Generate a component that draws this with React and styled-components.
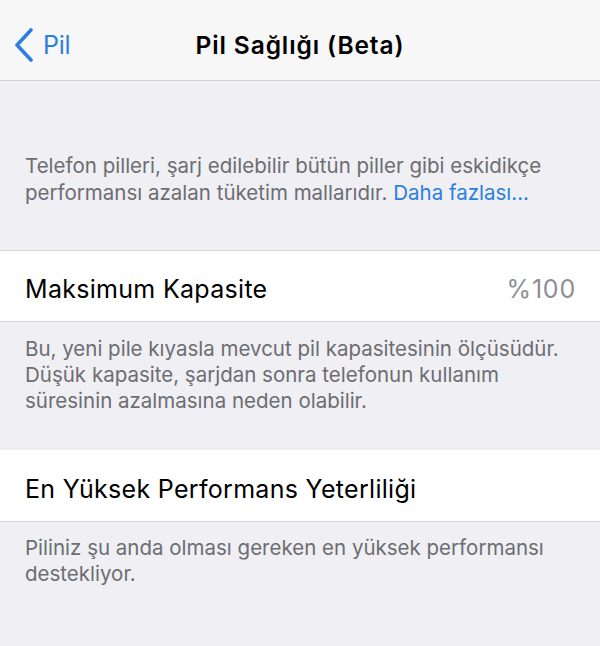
import React from 'react';
import styled, { createGlobalStyle } from 'styled-components';

const GlobalStyle = createGlobalStyle`
  html, body {
    margin: 0;
    padding: 0;
    background: #efeff4;
    font-family: Inter, "Noto Sans", sans-serif;
    -webkit-font-smoothing: antialiased;
  }
`

const Page = styled.div`
  width: 600px;
  height: 646px;
  overflow: hidden;
  background: #efeff4;
`

const NavBar = styled.div`
  height: 81px;
  background: #f7f7f8;
  border-bottom: 1px solid #cfcfd3;
  display: grid;
  grid-template-columns: 120px 1fr 120px;
  align-items: center;
  box-sizing: border-box;
  padding-top: 10px;
`

const BackButton = styled.div`
  display: flex;
  align-items: center;
  gap: 8px;
  padding-left: 13px;
  color: #2b7fe0;
  font-size: 25px;
  letter-spacing: -0.2px;
`

const Title = styled.div`
  text-align: center;
  font-size: 24.5px;
  font-weight: 600;
  color: #000;
  letter-spacing: 0.9px;
`

const Note = styled.p`
  margin: 0;
  padding: ${p => p.$pad};
  font-size: 20.5px;
  line-height: ${p => p.$lh || 26}px;
  color: #6d6d72;
  letter-spacing: 0;
`

const Link = styled.span`
  color: #2b7fe0;
`

const Row = styled.div`
  height: 64px;
  box-sizing: content-box;
  background: #fff;
  border-top: 1px solid ${p => p.$topLine ? '#d8d8dc' : '#fff'};
  border-bottom: 1px solid #d8d8dc;
  display: flex;
  align-items: center;
  justify-content: space-between;
  padding: 6px 24px 0 25px;
  font-size: 25px;
  color: #000;
  letter-spacing: 0.3px;
`

const Label = styled.span``

const Value = styled.span`
  color: #8e8e93;
  letter-spacing: 0.8px;
`

const Chevron = () => (
  <svg width="22" height="34" viewBox="0 0 22 34">
    <path d="M18 2 L4 17 L18 32" fill="none" stroke="#2b7fe0" strokeWidth="3.6" strokeLinecap="round" strokeLinejoin="round" />
  </svg>
)

export default function App() {
  return (
    <Page>
      <GlobalStyle />
      <NavBar>
        <BackButton>
          <Chevron />
          Pil
        </BackButton>
        <Title>Pil Sağlığı (Beta)</Title>
        <div />
      </NavBar>
      <Note $pad="71px 20px 44px 25px" $lh={27}>
        Telefon pilleri, şarj edilebilir bütün piller gibi eskidikçe<br />
        performansı azalan tüketim mallarıdır. <Link>Daha fazlası...</Link>
      </Note>
      <Row $topLine>
        <Label>Maksimum Kapasite</Label>
        <Value>%100</Value>
      </Row>
      <Note $pad="14px 20px 36px 25px">
        Bu, yeni pile kıyasla mevcut pil kapasitesinin ölçüsüdür.<br />
        Düşük kapasite, şarjdan sonra telefonun kullanım<br />
        süresinin azalmasına neden olabilir.
      </Note>
      <Row>
        <Label>En Yüksek Performans Yeterliliği</Label>
      </Row>
      <Note $pad="13px 20px 0 25px">
        Piliniz şu anda olması gereken en yüksek performansı<br />
        destekliyor.
      </Note>
    </Page>
  );
}
